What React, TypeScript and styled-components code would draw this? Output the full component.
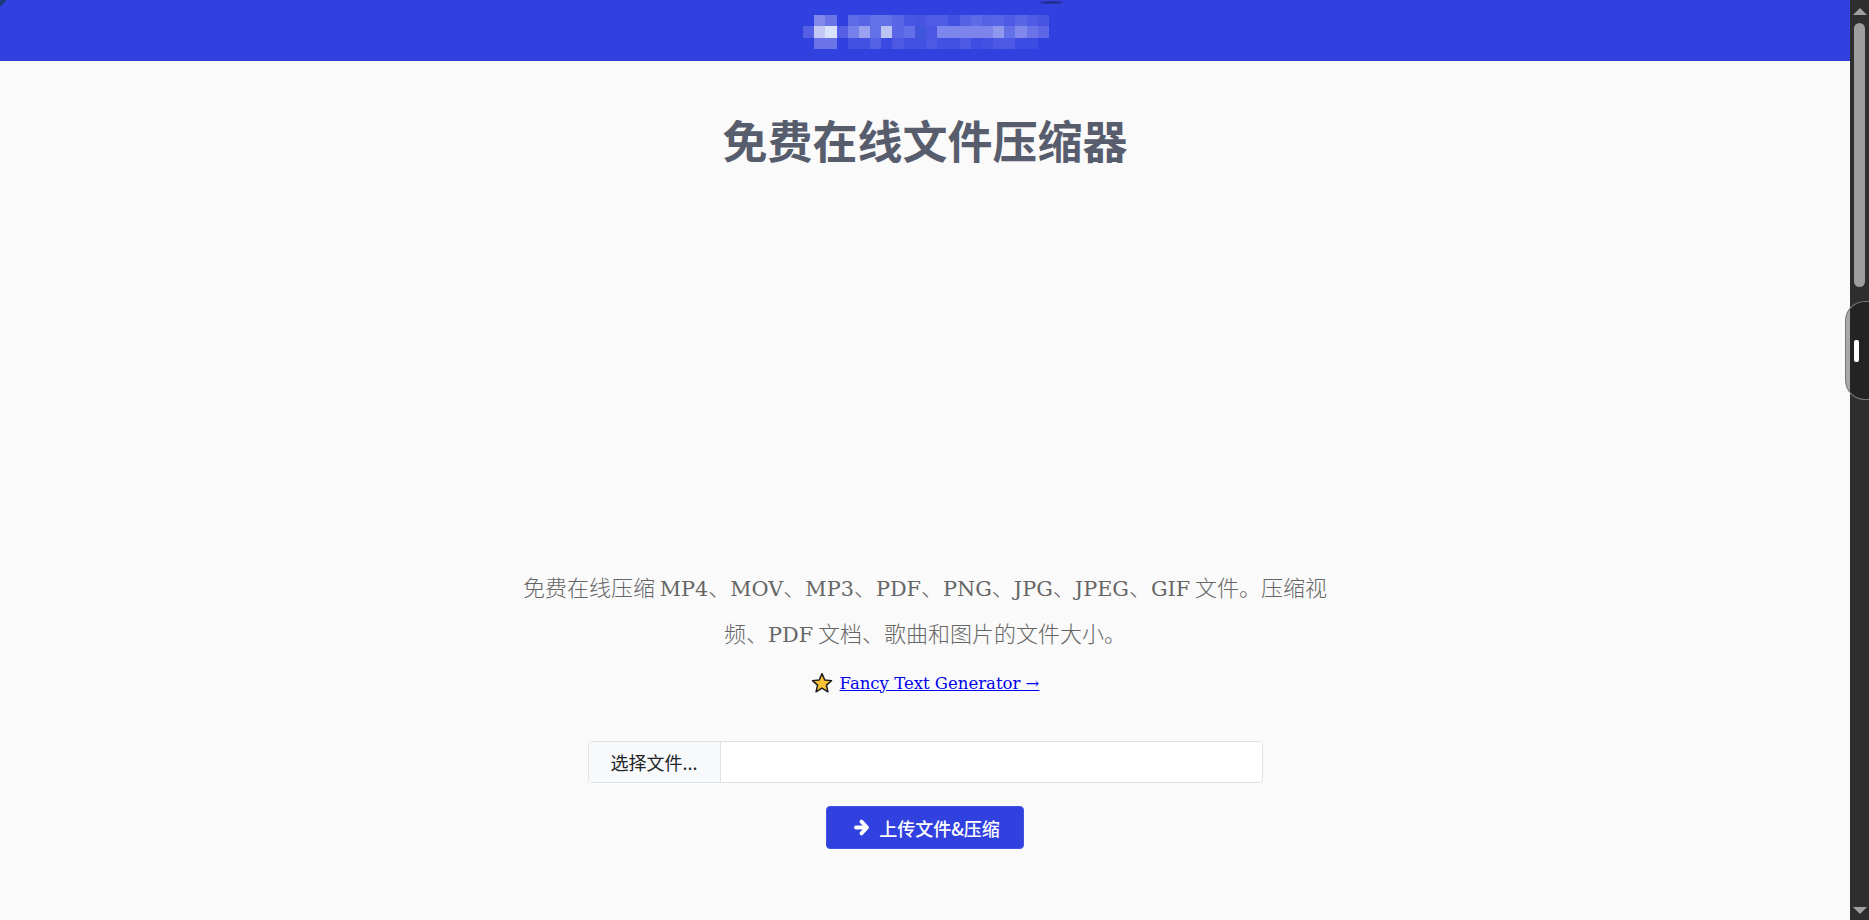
import React from "react";
import styled, { createGlobalStyle } from "styled-components";

const GlobalStyle = createGlobalStyle`
  html, body {
    margin: 0;
    height: 100%;
    overflow: hidden;
    background: #fafafa;
  }
  #root {
    height: 100%;
  }
`;

const Page = styled.div`
  display: flex;
  height: 920px;
  position: relative;
  overflow: hidden;
  font-family: "Noto Sans CJK SC", sans-serif;
`;

const Main = styled.main`
  flex: 1;
  min-width: 0;
  display: flex;
  flex-direction: column;
  align-items: center;
`;

const Header = styled.header`
  align-self: stretch;
  height: 61px;
  flex: none;
  background: #3141e0;
  display: flex;
  justify-content: center;
  position: relative;
`;

const Corner = styled.div`
  position: absolute;
  left: 0;
  top: 0;
  width: 0;
  height: 0;
  border-top: 7px solid #1f3a7a;
  border-right: 7px solid transparent;
`;

const TopArc = styled.div`
  position: absolute;
  left: 1040px;
  top: 1px;
  width: 23px;
  height: 3px;
  border-radius: 50%;
  background: #222f8f;
`;

const Title = styled.h1`
  margin: 47px 0 0;
  font-family: "Noto Sans CJK SC", sans-serif;
  font-size: 45px;
  line-height: 64px;
  font-weight: 700;
  color: #585d6e;
`;

const Intro = styled.p`
  margin: 391px 0 0;
  width: 815px;
  text-align: center;
  font-size: 22px;
  line-height: 46px;
  font-weight: 300;
  color: #666;
`;

const Latin = styled.span`
  font-family: "DejaVu Serif", "Noto Sans CJK SC", serif;
  font-size: 20.8px;
  line-height: 1;
  font-weight: 400;
`;

const Promo = styled.div`
  margin-top: 8px;
  display: flex;
  align-items: center;
  gap: 7px;
  height: 40px;
`;

const PromoLink = styled.a`
  color: #0000ee;
  text-decoration: underline;
  font-family: "DejaVu Serif", serif;
  font-size: 16.5px;
`;

const FileField = styled.div`
  margin-top: 38px;
  width: 675px;
  height: 42px;
  box-sizing: border-box;
  display: flex;
  background: #fff;
  border: 1px solid #dee2e6;
  border-radius: 4px;
  overflow: hidden;
`;

const FileButton = styled.div`
  width: 131px;
  flex: none;
  display: flex;
  align-items: center;
  justify-content: center;
  background: #f8f9fa;
  border-right: 1px solid #dee2e6;
  font-size: 18px;
  color: #212529;
`;

const SubmitButton = styled.button`
  margin-top: 23px;
  width: 198px;
  height: 43px;
  display: flex;
  align-items: center;
  justify-content: center;
  gap: 10px;
  padding: 0 0 0 4px;
  background: #3141e0;
  border: 1px solid #4553e4;
  border-radius: 4px;
  color: #fff;
  font-family: "Noto Sans CJK SC", sans-serif;
  font-size: 18px;
  font-weight: 500;
`;

const ScrollTrack = styled.aside`
  width: 19px;
  flex: none;
  background: #2e2e2e;
  display: flex;
  flex-direction: column;
  align-items: center;
`;

const ArrowUp = styled.div`
  margin-top: 8px;
  border-left: 7px solid transparent;
  border-right: 7px solid transparent;
  border-bottom: 7px solid #a0a0a0;
`;

const ScrollThumb = styled.div`
  margin-top: 8px;
  width: 11px;
  height: 264px;
  border-radius: 6px;
  background: #9e9e9e;
`;

const ArrowDown = styled.div`
  margin-top: auto;
  margin-bottom: 6px;
  border-left: 7px solid transparent;
  border-right: 7px solid transparent;
  border-top: 7px solid #a0a0a0;
`;

const SideHandle = styled.div`
  position: absolute;
  right: 0;
  top: 301px;
  width: 24px;
  height: 99px;
  box-sizing: border-box;
  background: linear-gradient(to right, #a8a8a8 4px, #232323 4px);
  border: 1px solid #777;
  border-right: none;
  border-radius: 20px 0 0 20px;
  display: flex;
  align-items: center;
  padding-left: 8px;
`;

const HandleGrip = styled.div`
  width: 5px;
  height: 22px;
  border-radius: 2px;
  background: #fff;
`;

const mosaic: string[][] = [
  ["", "#8088ec", "#6a74e8", "", "#5f6ae6", "#5a65e6", "#6470e8", "#6470e8", "#5a66e6", "#4a56e4", "#4653e3", "#4f5be4", "#4f5be4", "#4351e2", "#5560e5", "#5f6ae6", "#5560e5", "#5864e6", "#4f5be4", "#5a66e6", "#4f5be4", "#4653e3"],
  ["#5560e5", "#c4c8f6", "#d8e2fa", "#5560e5", "#7680ea", "#9aa2ef", "#6470e8", "#bcc4f4", "#5a66e6", "#6470e8", "#3f55dc", "#4a56e4", "#7c86ec", "#7c86ec", "#7c84ec", "#7c84ec", "#7c84ec", "#9098ee", "#6470e8", "#8088ec", "#6a74e8", "#5c66e6"],
  ["", "#6a74e8", "#6a74e8", "", "#4351e2", "#4351e2", "#5560e5", "#3a49e1", "#4d59e4", "#4351e2", "#4351e2", "#4d59e4", "#4351e2", "#4351e2", "#4d59e4", "#3f4de2", "#4351e2", "#4d59e4", "#4d59e4", "#3c4be2", "#3c4be2", ""],
];

const HeaderMosaic = () => (
  <svg width="246" height="34" viewBox="0 0 242 33" style={{ marginTop: 15, marginLeft: 2 }} shapeRendering="crispEdges">
    {mosaic.map((row, y) =>
      row.map((fill, x) => (fill ? <rect key={`${x}-${y}`} x={x * 11} y={y * 11} width="11" height="11" fill={fill} /> : null))
    )}
  </svg>
);

const StarIcon = () => (
  <svg width="22" height="22" viewBox="0 0 24 24">
    <path
      d="M12 1.8l3 6.9 7.4.7-5.6 4.9 1.7 7.3-6.5-3.9-6.5 3.9 1.7-7.3-5.6-4.9 7.4-.7z"
      fill="#fdc136"
      stroke="#1a1a1a"
      strokeWidth="1.6"
      strokeLinejoin="round"
    />
  </svg>
);

const ArrowIcon = () => (
  <svg width="15" height="17" viewBox="0 0 15 17" fill="none" stroke="#fff" strokeWidth="3.8" strokeLinejoin="round" strokeLinecap="round">
    <path d="M2 8.5H11.5" />
    <path d="M7.5 2.6L13 8.5L7.5 14.4" />
  </svg>
);

export default function App() {
  return (
    <Page>
      <GlobalStyle />
      <Main>
        <Header>
          <Corner />
          <HeaderMosaic />
          <TopArc />
        </Header>
        <Title>免费在线文件压缩器</Title>
        <Intro>
          免费在线压缩 <Latin>MP4</Latin>、<Latin>MOV</Latin>、<Latin>MP3</Latin>、<Latin>PDF</Latin>、<Latin>PNG</Latin>、<Latin>JPG</Latin>、<Latin>JPEG</Latin>、<Latin>GIF</Latin> 文件。压缩视频、<Latin>PDF</Latin> 文档、歌曲和图片的文件大小。
        </Intro>
        <Promo>
          <StarIcon />
          <PromoLink href="#">Fancy Text Generator →</PromoLink>
        </Promo>
        <FileField>
          <FileButton>选择文件...</FileButton>
        </FileField>
        <SubmitButton>
          <ArrowIcon />
          上传文件&amp;压缩
        </SubmitButton>
      </Main>
      <ScrollTrack>
        <ArrowUp />
        <ScrollThumb />
        <ArrowDown />
      </ScrollTrack>
      <SideHandle>
        <HandleGrip />
      </SideHandle>
    </Page>
  );
}
